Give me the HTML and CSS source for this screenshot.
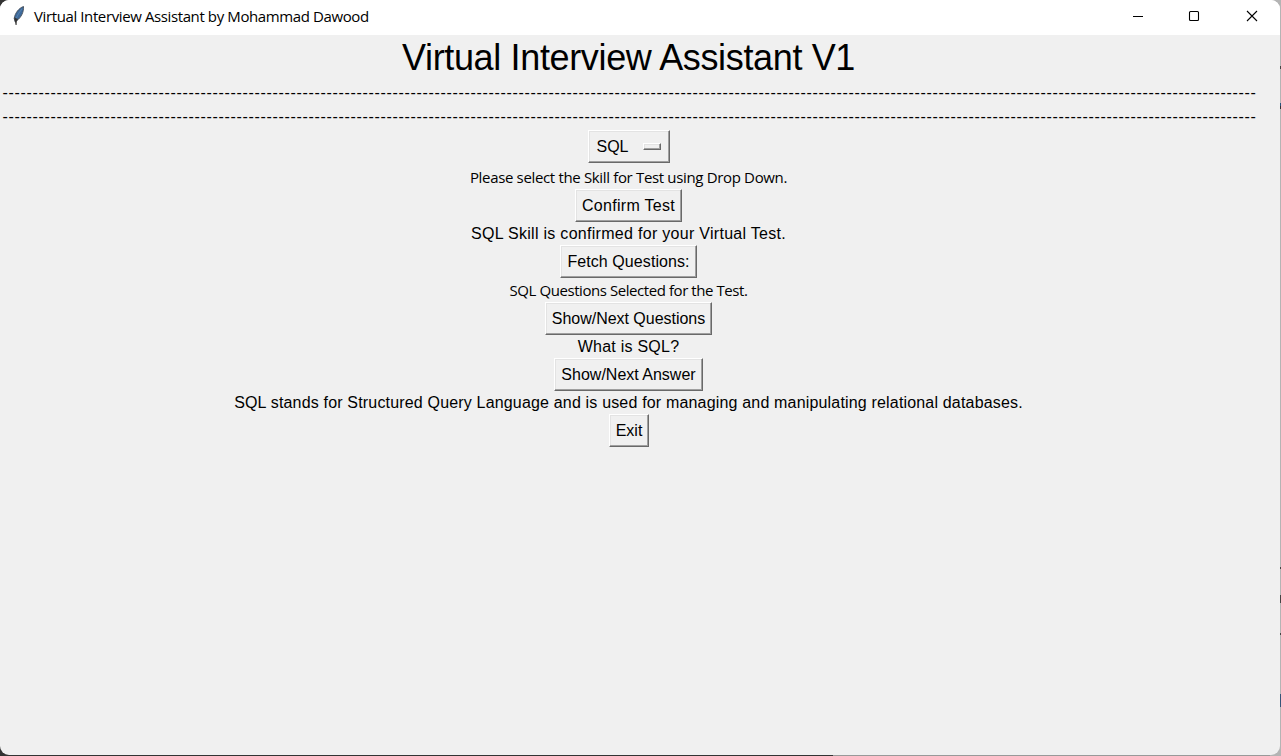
FILE: index.html
```html
<!DOCTYPE html>
<html lang="en">
<head>
<meta charset="utf-8">
<title>Virtual Interview Assistant by Mohammad Dawood</title>
<link rel="stylesheet" href="styles.css">
</head>
<body>
<div class="desktop">
<div class="window">
  <header class="titlebar">
    <svg class="feather" width="14" height="20" viewBox="0 0 14 20">
      <path d="M11.5 .5C7 2 3 7 2.2 12.5L3.2 16 5 14.5C9 11.5 12 6 11.5.5Z" fill="#3d6a9c" stroke="#454d57" stroke-width=".9"/>
      <path d="M10 3C6.5 7 4.5 11 3.3 15.5" fill="none" stroke="#6f93b8" stroke-width=".6"/>
      <path d="M2.2 11.5L3 15.5 3.6 19 4.6 19 4.8 15 6 13Z" fill="#333"/>
    </svg>
    <span class="caption">Virtual Interview Assistant by Mohammad Dawood</span>
    <div class="controls">
      <svg width="57" height="35" viewBox="0 0 57 35"><path d="M22 16.5H32" stroke="#000"/></svg>
      <svg width="57" height="35" viewBox="0 0 57 35"><rect x="21.5" y="11.5" width="9" height="9" rx="1" fill="none" stroke="#000" stroke-width="1.1"/></svg>
      <svg width="57" height="35" viewBox="0 0 57 35"><path d="M22 11L32 21M32 11L22 21" stroke="#000" stroke-width="1.1"/></svg>
    </div>
  </header>
  <main class="content">
    <h1 class="heading">Virtual Interview Assistant V1</h1>
    <div class="rule">-----------------------------------------------------------------------------------------------------------------------------------------------------------------------------------------------------------------</div>
    <div class="rule">-----------------------------------------------------------------------------------------------------------------------------------------------------------------------------------------------------------------</div>
    <button class="btn select">SQL<span class="indicator"></span></button>
    <p class="note note-first">Please select the Skill for Test using Drop Down.</p>
    <button class="btn confirm">Confirm Test</button>
    <p class="label skill">SQL Skill is confirmed for your Virtual Test.</p>
    <button class="btn fetch">Fetch Questions:</button>
    <p class="note">SQL Questions Selected for the Test.</p>
    <button class="btn question">Show/Next Questions</button>
    <p class="label prompt">What is SQL?</p>
    <button class="btn answer">Show/Next Answer</button>
    <p class="label reply">SQL stands for Structured Query Language and is used for managing and manipulating relational databases.</p>
    <button class="btn exit">Exit</button>
  </main>
</div>
</div>
</body>
</html>
```

FILE: styles.css
```css
* { box-sizing: border-box; }
body { margin: 0; }
.desktop {
  height: 756px;
  background:
    linear-gradient(transparent 66px, #444 66px 69px, transparent 69px 103px, #28557f 103px 106px, #333 106px 109px, transparent 109px 567px, #444 567px 569px, transparent 569px 595px, #444 595px 603px, transparent 603px 633px, #444 633px 635px, transparent 635px 694px, #355579 694px 707px, transparent 707px) right / 1px 756px no-repeat,
    linear-gradient(90deg, #333 0 833px, #999 833px 1270px, #b4b4b4 1270px);
}
.window {
  width: 1280px;
  height: 755px;
  background: #f0f0f0;
  border-radius: 9px;
  overflow: hidden;
  color: #000;
}
.titlebar {
  height: 35px;
  background: #fff;
  display: flex;
  align-items: center;
  padding-left: 12px;
}
.feather { margin-top: -4px; }
.caption {
  font: 15px/20px "Open Sans", sans-serif;
  letter-spacing: -.39px;
  margin: -4px 0 0 8px;
  white-space: nowrap;
}
.controls { display: flex; margin: 0 -2px 0 auto; }
.content {
  width: 1257px;
  display: flex;
  flex-direction: column;
  align-items: center;
  font: 16px/23px "Liberation Sans", Arial, sans-serif;
}
.heading {
  margin: 0;
  height: 46px;
  font-size: 36px;
  font-weight: 400;
  line-height: 45px;
  letter-spacing: -.35px;
  white-space: nowrap;
}
.rule {
  height: 24px;
  padding-left: 2px;
  font-size: 16px;
  line-height: 23px;
  letter-spacing: .672px;
  white-space: nowrap;
}
.btn {
  height: 33px;
  padding: 0;
  font: inherit;
  color: #000;
  background: #f0f0f0;
  border: 1px solid;
  border-color: #fff #696969 #696969 #fff;
  box-shadow: inset -1px -1px #a0a0a0, inset 1px 1px #e3e3e3;
  white-space: nowrap;
}
.select {
  width: 82px;
  margin-top: 1px;
  display: flex;
  align-items: center;
  justify-content: space-between;
  padding: 0 8px;
}
.indicator {
  width: 18px;
  height: 7px;
  border: 1px solid;
  border-color: #fff #696969 #696969 #fff;
  box-shadow: inset -1px -1px #a0a0a0, inset 1px 1px #e3e3e3;
}
.confirm { width: 107px; letter-spacing: .3px; }
.fetch { width: 137px; letter-spacing: .08px; }
.question { width: 167px; letter-spacing: -.03px; }
.answer { width: 149px; }
.exit { width: 40px; padding-left: 1px; }
.label, .note { margin: 0; white-space: nowrap; height: 23px; }
.skill { letter-spacing: .29px; }
.prompt { letter-spacing: .25px; }
.reply { letter-spacing: .174px; }
.note {
  height: 24px;
  font: 15px/25px "Open Sans", sans-serif;
  letter-spacing: -.43px;
}
.note-first { height: 26px; line-height: 29px; letter-spacing: -.34px; }
```
